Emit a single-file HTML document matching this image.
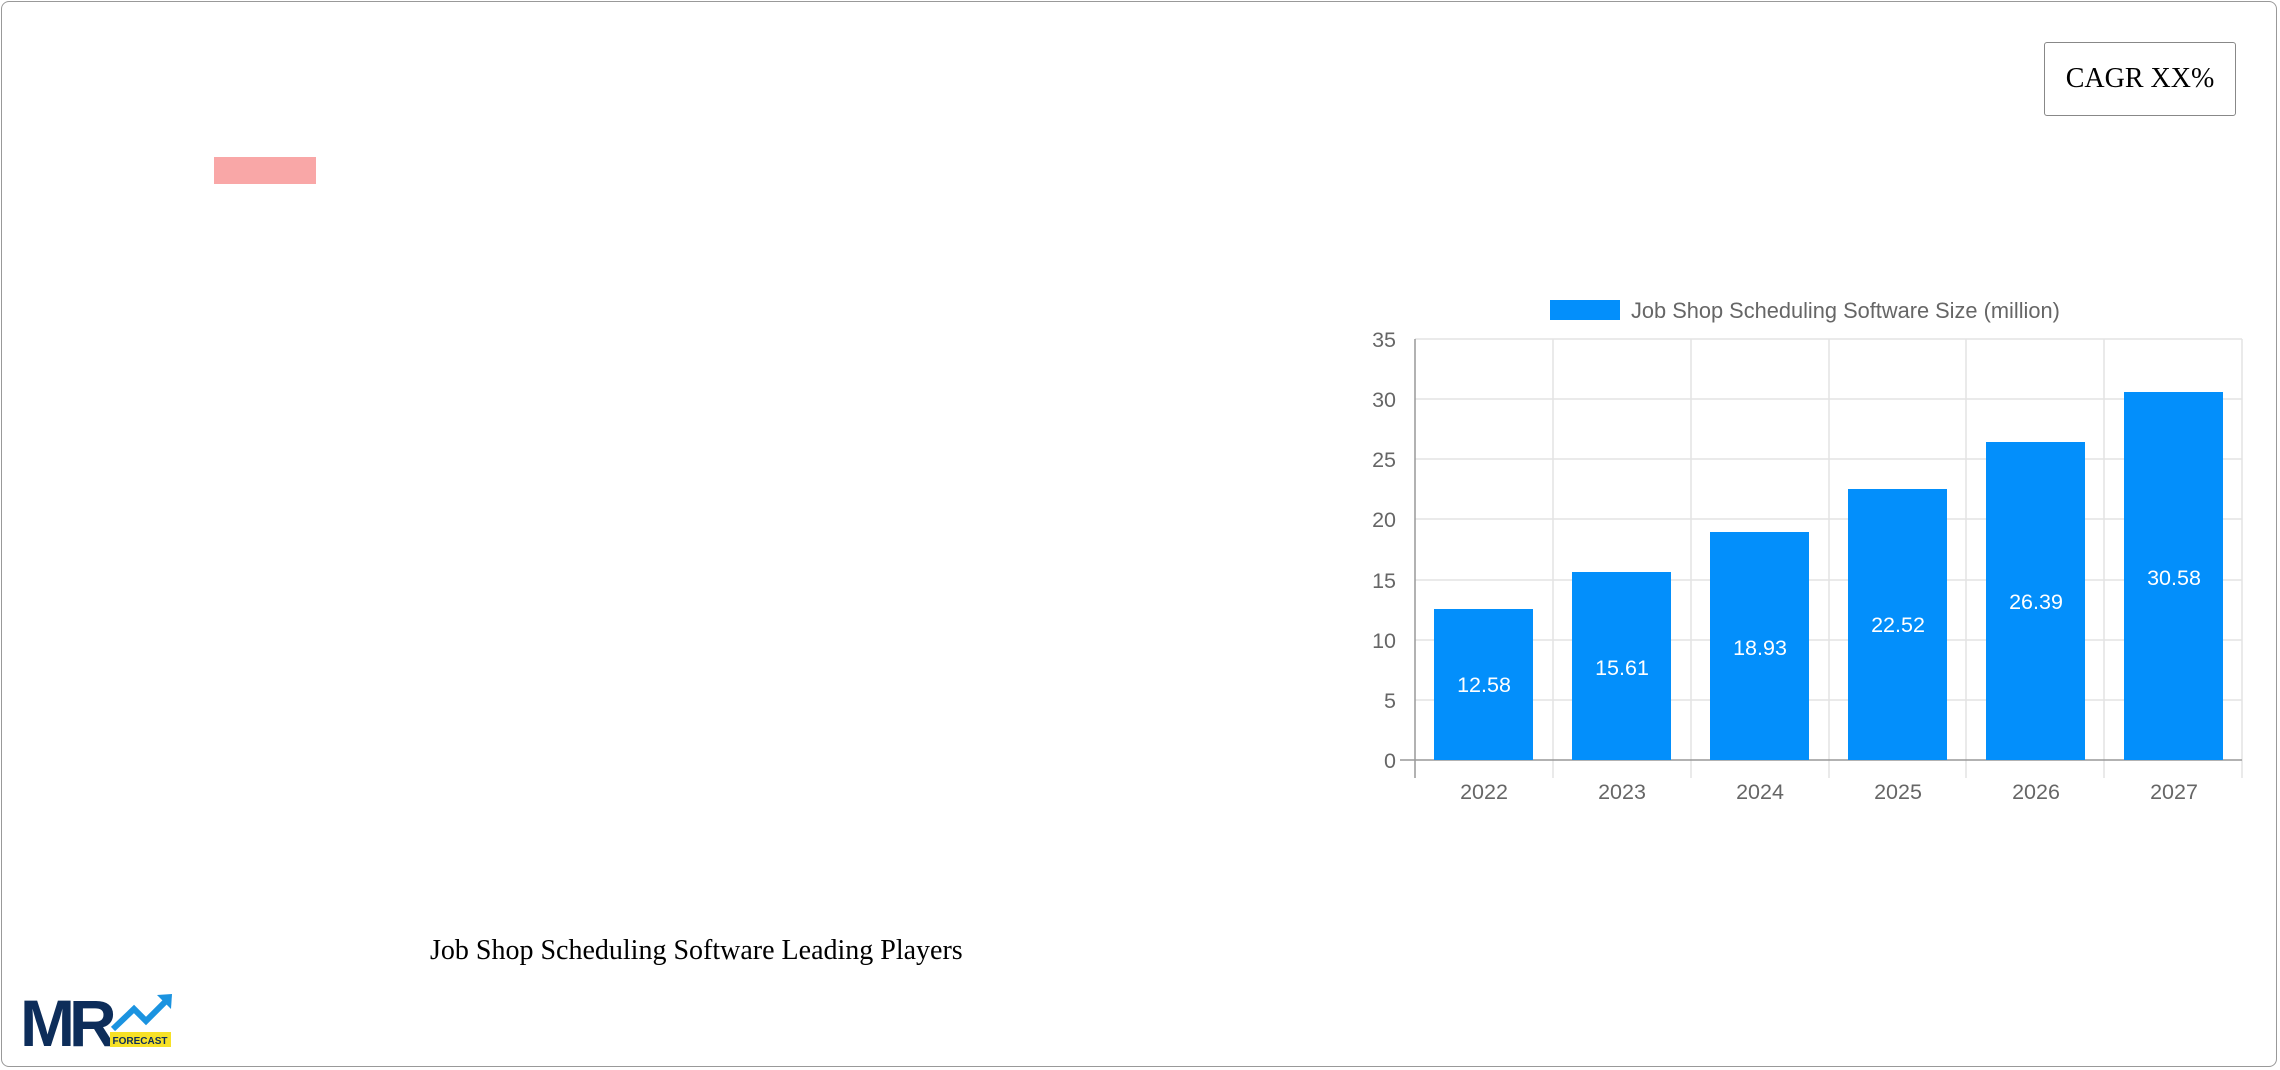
<!DOCTYPE html>
<html><head><meta charset="utf-8"><style>
html,body{margin:0;padding:0;width:2280px;height:1070px;overflow:hidden;background:#fff}
.frame{position:absolute;left:1px;top:1px;width:2276px;height:1066px;border:1px solid #999;border-radius:8px;box-sizing:border-box}
.cagr{position:absolute;left:2044px;top:42px;width:192px;height:74px;border:1.5px solid #888;border-radius:3px;box-sizing:border-box;font:28px "Liberation Serif",serif;display:flex;align-items:center;justify-content:center;color:#000}
.pink{position:absolute;left:214px;top:157px;width:102px;height:27px;background:#f9a7a7}
.lead{position:absolute;left:430px;top:935px;font:28px "Liberation Serif",serif;color:#000}
svg{position:absolute;left:0;top:0}
</style></head><body>
<div class="frame"></div>
<div class="cagr">CAGR XX%</div>
<div class="pink"></div>
<div class="lead">Job Shop Scheduling Software Leading Players</div>
<svg width="2280" height="1070" font-family="Liberation Sans, sans-serif">
<rect x="1550" y="300" width="70" height="20" fill="#038ffb"/>
<text x="1631" y="318" font-size="21.8" fill="#666">Job Shop Scheduling Software Size (million)</text>
<g stroke="#e3e3e3" stroke-width="1.5">
<line x1="1415" y1="339" x2="2242" y2="339"/>
<line x1="1415" y1="399" x2="2242" y2="399"/>
<line x1="1415" y1="459" x2="2242" y2="459"/>
<line x1="1415" y1="519" x2="2242" y2="519"/>
<line x1="1415" y1="580" x2="2242" y2="580"/>
<line x1="1415" y1="640" x2="2242" y2="640"/>
<line x1="1415" y1="700" x2="2242" y2="700"/>
<line x1="1553" y1="339" x2="1553" y2="778"/>
<line x1="1691" y1="339" x2="1691" y2="778"/>
<line x1="1829" y1="339" x2="1829" y2="778"/>
<line x1="1966" y1="339" x2="1966" y2="778"/>
<line x1="2104" y1="339" x2="2104" y2="778"/>
<line x1="2242" y1="339" x2="2242" y2="778"/>
</g>
<g stroke="#999" stroke-width="1.5">
<line x1="1415" y1="339" x2="1415" y2="778"/>
<line x1="1400" y1="760" x2="2242" y2="760"/>
</g>
<g font-size="21.5" fill="#666" text-anchor="end">
<text x="1396" y="347">35</text><text x="1396" y="407">30</text><text x="1396" y="467">25</text>
<text x="1396" y="527">20</text><text x="1396" y="588">15</text><text x="1396" y="648">10</text>
<text x="1396" y="708">5</text><text x="1396" y="768">0</text>
</g>
<g fill="#038ffb">
<rect x="1434" y="609" width="99" height="151"/>
<rect x="1572" y="572" width="99" height="188"/>
<rect x="1710" y="532" width="99" height="228"/>
<rect x="1848" y="489" width="99" height="271"/>
<rect x="1986" y="442" width="99" height="318"/>
<rect x="2124" y="392" width="99" height="368"/>
</g>
<g font-size="21.5" fill="#fff" text-anchor="middle">
<text x="1484" y="692">12.58</text><text x="1622" y="675">15.61</text><text x="1760" y="655">18.93</text>
<text x="1898" y="632">22.52</text><text x="2036" y="609">26.39</text><text x="2174" y="585">30.58</text>
</g>
<g font-size="21.5" fill="#666" text-anchor="middle">
<text x="1484" y="799">2022</text><text x="1622" y="799">2023</text><text x="1760" y="799">2024</text>
<text x="1898" y="799">2025</text><text x="2036" y="799">2026</text><text x="2174" y="799">2027</text>
</g>
<text x="20" y="1046" font-size="66" font-weight="bold" fill="#0d2d5a" letter-spacing="-6" font-family="Liberation Sans, sans-serif">MR</text>
<polyline points="113,1029 134,1009 146,1021 165,1002" fill="none" stroke="#1b93e0" stroke-width="6"/>
<polygon points="157,995 172,994 171,1009" fill="#1b93e0"/>
<rect x="110" y="1032" width="61" height="15" fill="#f7e127"/>
<text x="140" y="1044" font-size="10" font-weight="bold" fill="#0d2d5a" text-anchor="middle">FORECAST</text>
</svg>
</body></html>
